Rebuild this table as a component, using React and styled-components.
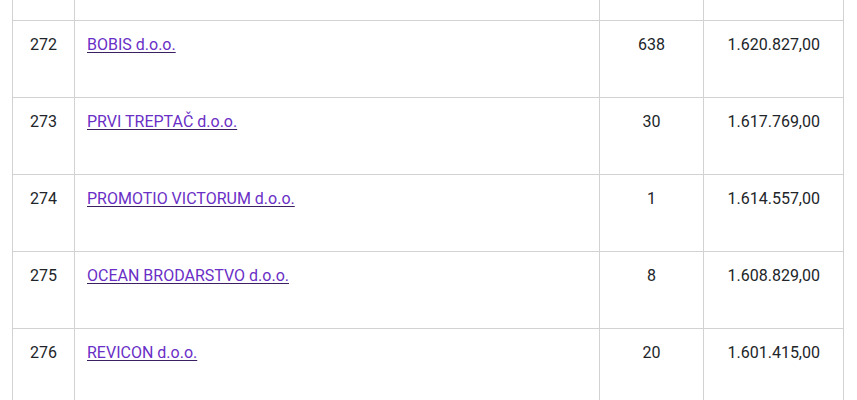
import React from 'react'
import styled, { createGlobalStyle } from 'styled-components'

const GlobalStyle = createGlobalStyle`
  html, body {
    margin: 0;
    padding: 0;
    background: #ffffff;
    font-family: Roboto, "Liberation Sans", Arial, sans-serif;
  }
`

const Page = styled.div`
  padding: 0 13px 0 12px;
  height: 400px;
  overflow: hidden;
`

const Table = styled.table`
  width: 100%;
  border-collapse: collapse;
  table-layout: fixed;
  font-size: 16px;
  line-height: 24px;
  color: #212529;
`

const Row = styled.tr`
  height: ${(p) => (p.$cut ? '20px' : '77px')};
`

const Cell = styled.td`
  border: 1px solid #d2d2d2;
  padding: ${(p) => (p.$cut ? '0' : '12px 12px 40px')};
  vertical-align: top;
  text-align: ${(p) => p.$align || 'left'};
  ${(p) => p.$cut && 'border-top: none;'}
`

const CompanyLink = styled.a`
  color: #6a2fc6;
  text-decoration: underline;
  text-decoration-color: #3a1f63;
  text-underline-offset: 2px;
`

const rows = [
  { rank: 272, name: 'BOBIS d.o.o.', count: 638, amount: '1.620.827,00' },
  { rank: 273, name: 'PRVI TREPTAČ d.o.o.', count: 30, amount: '1.617.769,00' },
  { rank: 274, name: 'PROMOTIO VICTORUM d.o.o.', count: 1, amount: '1.614.557,00' },
  { rank: 275, name: 'OCEAN BRODARSTVO d.o.o.', count: 8, amount: '1.608.829,00' },
  { rank: 276, name: 'REVICON d.o.o.', count: 20, amount: '1.601.415,00' },
]

export default function App() {
  return (
    <Page>
      <GlobalStyle />
      <Table>
        <colgroup>
          <col style={{ width: 62 }} />
          <col style={{ width: 525 }} />
          <col style={{ width: 104 }} />
          <col style={{ width: 140 }} />
        </colgroup>
        <tbody>
          <Row $cut>
            <Cell $cut />
            <Cell $cut />
            <Cell $cut />
            <Cell $cut />
          </Row>
          {rows.map((r) => (
            <Row key={r.rank}>
              <Cell $align="center">{r.rank}</Cell>
              <Cell>
                <CompanyLink href="#">{r.name}</CompanyLink>
              </Cell>
              <Cell $align="center">{r.count}</Cell>
              <Cell $align="right" style={{ paddingRight: 23 }}>{r.amount}</Cell>
            </Row>
          ))}
        </tbody>
      </Table>
    </Page>
  )
}
